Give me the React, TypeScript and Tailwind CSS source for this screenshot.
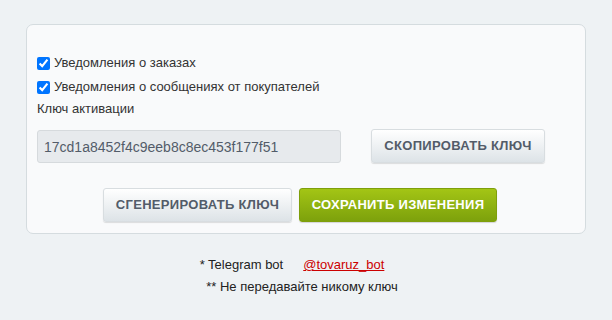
const App = () => {
  return (
    <div className="min-h-[320px] w-[612px] bg-[#eef2f4] pt-[24px] font-['Liberation_Sans',Arial,sans-serif] text-[13px] text-[#333]">
      <section className="mx-[26px] h-[210px] rounded-[7px] border border-[#d5dcdf] bg-[#f9fafb] px-[10px] pt-[26px]">
        <label className="flex h-[24px] items-center gap-[4px]">
          <input type="checkbox" defaultChecked className="h-[13px] w-[13px] accent-[#0075ff]" />
          <span>Уведомления о заказах</span>
        </label>
        <label className="flex h-[24px] items-center gap-[4px]">
          <input type="checkbox" defaultChecked className="h-[13px] w-[13px] accent-[#0075ff]" />
          <span>Уведомления о сообщениях от покупателей</span>
        </label>
        <div className="flex h-[20px] items-center">Ключ активации</div>
        <div className="mt-[11px] flex items-center gap-[30px]">
          <input
            readOnly
            value="17cd1a8452f4c9eeb8c8ec453f177f51"
            className="h-[33px] w-[304px] rounded-[3px] border border-[#d6dadd] bg-[#e7eaed] px-[6px] text-[14px] text-[#535c69] outline-none"
          />
          <button className="mt-[-2px] h-[34px] w-[174px] rounded-[3px] border border-[#d8dde0] bg-gradient-to-b from-[#ffffff] to-[#dde3e7] text-[13px] font-bold tracking-[0.3px] text-[#535c69] shadow-[0_1px_1px_rgba(0,0,0,0.12)]">
            СКОПИРОВАТЬ КЛЮЧ
          </button>
        </div>
        <div className="mt-[25px] flex justify-center gap-[7px] pr-[12px]">
          <button className="h-[34px] w-[189px] rounded-[3px] border border-[#d8dde0] bg-gradient-to-b from-[#ffffff] to-[#dde3e7] text-[13px] font-bold tracking-[0.3px] text-[#535c69] shadow-[0_1px_1px_rgba(0,0,0,0.12)]">
            СГЕНЕРИРОВАТЬ КЛЮЧ
          </button>
          <button className="h-[34px] w-[198px] rounded-[3px] border border-[#7f9f0b] bg-gradient-to-b from-[#a3c515] to-[#7da10c] text-[13px] font-bold tracking-[0.3px] text-white shadow-[0_1px_1px_rgba(0,0,0,0.15)]">
            СОХРАНИТЬ ИЗМЕНЕНИЯ
          </button>
        </div>
      </section>
      <div className="mt-[20px] flex flex-col items-center text-[#222]">
        <div className="flex h-[22px] items-center pr-[28px]">
          <span>* Telegram bot</span>
          <a href="#" className="ml-[20px] text-[#cc0000] underline">
            @tovaruz_bot
          </a>
        </div>
        <div className="flex h-[22px] items-center pr-[8px]">** Не передавайте никому ключ</div>
      </div>
    </div>
  );
};

export default App;
